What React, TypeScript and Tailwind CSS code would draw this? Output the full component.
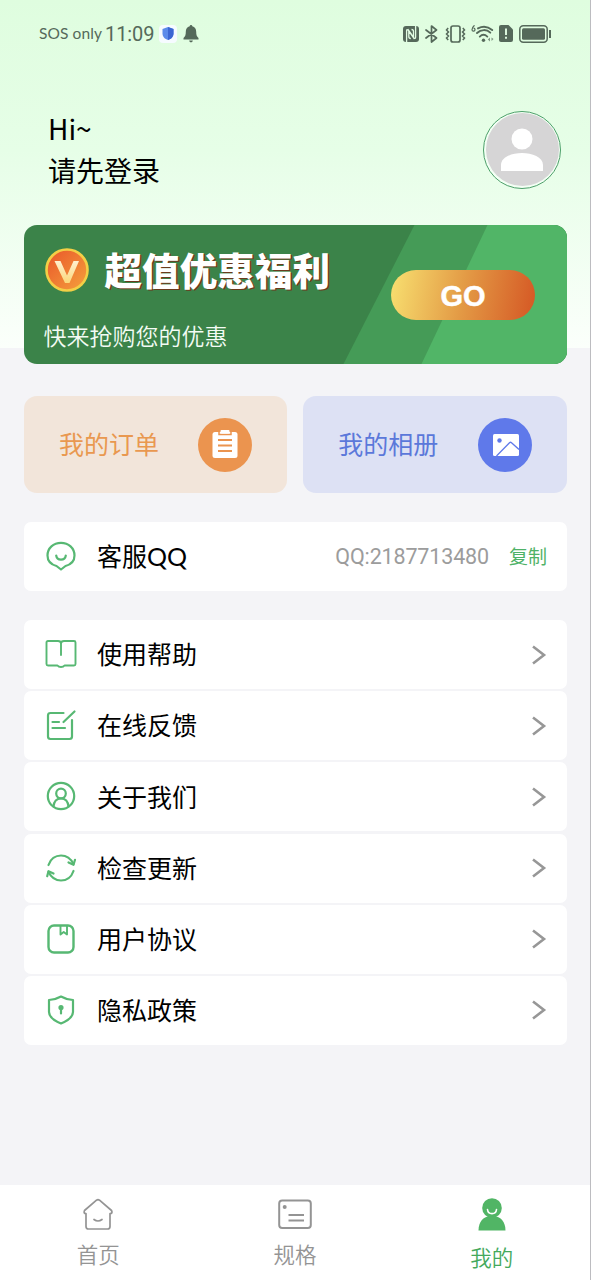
import { ReactNode } from "react";

const StatusBar = () => {
  return (
    <div className="flex h-[67px] items-center pl-[39px] pr-[38px] text-[#55695a]">
      <span className="w-[66px] whitespace-nowrap font-['Lato',sans-serif] text-[15.500px] tracking-[0.100px]">
        SOS only
      </span>
      <span className="w-[54px] whitespace-nowrap font-['Roboto',sans-serif] text-[20px] tracking-[-0.1px]">
        11:09
      </span>
      <span className="flex h-[18px] w-[18px] items-center justify-center rounded bg-[#f6fbff]">
        <svg width="12" height="13" viewBox="0 0 12 13">
          <path d="M6 0 11.500 2v4.500C11.500 10 9 12 6 13 3 12 .5 10 .5 6.500V2Z" fill="#5b8bea" />
          <path d="M6 0 11.500 2v4.500C11.500 10 9 12 6 13Z" fill="#3c66d2" />
        </svg>
      </span>
      <svg className="ml-[6px]" width="16" height="18" viewBox="0 0 16 18" fill="currentColor">
        <path d="M8 0c.8 0 1.300.6 1.300 1.300C11.900 1.900 13.200 4 13.200 6.800c0 3.200.5 4.800 2.300 6.200v1.500H.5V13c1.800-1.400 2.300-3 2.300-6.200C2.800 4 4.100 1.900 6.700 1.300 6.700.6 7.200 0 8 0Z" />
        <path d="M6.200 15.500h3.600C9.800 16.700 9 17.300 8 17.300s-1.800-.6-1.800-1.800Z" />
      </svg>

      <div className="ml-auto flex items-center">
        {/* nfc */}
        <svg width="16" height="16" viewBox="0 0 16 16">
          <path d="M3 0h10a3 3 0 0 1 3 3v10a3 3 0 0 1-3 3H3a3 3 0 0 1-3-3V3a3 3 0 0 1 3-3Z" fill="currentColor" />
          <path d="M3.600 16V5Q3.600 2.600 5.300 4.300L10.500 11.700V5.500Q10.500 3.500 8.500 3.500M12.600 0V11Q12.600 13.400 10.800 11.700L5.800 4.500V10.500Q5.800 12.500 7.800 12.500" fill="none" stroke="#e2fde3" strokeWidth="1.300" />
        </svg>
        <svg className="ml-[6px]" width="13" height="18" viewBox="0 0 13 18" fill="none" stroke="currentColor" strokeWidth="1.700" strokeLinejoin="round" strokeLinecap="round">
          <path d="m1 5 10.500 8L6.500 17V1l5 4L1 13" />
        </svg>
        {/* vibrate */}
        <svg className="ml-[7px]" width="21" height="18" viewBox="0 0 21 18" fill="none" stroke="currentColor" strokeWidth="1.500">
          <rect x="6" y="1" width="9" height="16" rx="2" strokeWidth="1.700" />
          <path d="M3.200 3 1.500 5l2 2-2 2 2 2-2 2 1.700 2M17.800 3l1.700 2-2 2 2 2-2 2 2 2-1.700 2" />
        </svg>
        {/* wifi 6 */}
        <svg className="ml-[5px]" width="24" height="18" viewBox="0 0 24 18">
          <g fill="none" stroke="currentColor" strokeWidth="1.900" strokeLinecap="round">
            <path d="M7 3.400c5-2.600 10.300-1.600 14.200 1.700" />
            <path d="M6 8c4-3.800 9.700-3.900 13.300-.3" />
            <path d="M8.800 11.600c2.200-2.100 5.200-2.100 7.500 0" />
          </g>
          <circle cx="12.500" cy="15.300" r="1.700" fill="currentColor" />
          <path d="M19 12.500v4l-2.200-2ZM20.500 12.500l2 1.500-2 2" fill="currentColor" opacity=".7" />
          <path d="M3.500.3C1.700 1.800 1 3.500 1 4.700a1.500 1.500 0 1 0 1.500-1.600" fill="none" stroke="currentColor" strokeWidth="1.200" />
        </svg>
        <svg className="ml-[4px]" width="14" height="17" viewBox="0 0 14 17">
          <path d="M2 0h7.500L14 4.500V15a2 2 0 0 1-2 2H2a2 2 0 0 1-2-2V2a2 2 0 0 1 2-2Z" fill="currentColor" />
          <path d="M7 3.500v6.500M7 11.800v2" stroke="#e2fde3" strokeWidth="1.900" />
        </svg>
        <svg className="ml-[6px]" width="33" height="18" viewBox="0 0 33 18">
          <rect x=".8" y=".8" width="27.400" height="16.400" rx="3.500" fill="none" stroke="currentColor" strokeWidth="1.500" />
          <rect x="3" y="3.300" width="23" height="11.400" rx="1.500" fill="currentColor" />
          <path d="M31 5v8" stroke="currentColor" strokeWidth="2" />
        </svg>
      </div>
    </div>
  );
};

const Profile = () => {
  return (
    <div className="flex h-[158px] items-start justify-between pl-12 pr-[29px] pt-[42px]">
      <div className="text-[28px] leading-[41px] text-black">
        <p className="-mt-px mb-px">Hi~</p>
        <p>请先登录</p>
      </div>
      <div className="mt-[1.500px] flex h-[78px] w-[78px] items-center justify-center rounded-full border-[1.500px] border-[#4da06a] bg-[#f3fff4]">
        <div className="flex h-[73px] w-[73px] items-center justify-center rounded-full bg-[#d6d5d6]">
          <svg className="-mt-px" width="42" height="43" viewBox="0 0 42 43" fill="white">
            <circle cx="21" cy="11" r="10.500" />
            <path d="M0 43v-6C0 29 11 25 21 25s21 4 21 12v6Z" />
          </svg>
        </div>
      </div>
    </div>
  );
};

const Banner = () => {
  return (
    <div className="relative h-[139px] shrink-0 overflow-hidden rounded-[13px] bg-[#3b8349]">
      <div className="absolute inset-0 bg-[#459b57] [clip-path:polygon(391px_0,100%_0,100%_100%,320px_100%)]" />
      <div className="absolute inset-0 bg-[#51b567] [clip-path:polygon(464px_0,100%_0,100%_100%,398px_100%)]" />
      <div className="relative flex h-full justify-between pl-[20px] pr-[32px]">
        <div>
          <div className="flex h-[90px] items-center gap-[16px]">
            <svg className="ml-px" width="44" height="44" viewBox="0 0 44 44">
              <defs>
                <linearGradient id="coin" x1="0" y1="0" x2="1" y2="1">
                  <stop offset="0" stopColor="#e9552a" />
                  <stop offset="1" stopColor="#f5a23c" />
                </linearGradient>
                <linearGradient id="vee" x1="0" y1="0" x2="0" y2="1">
                  <stop offset="0" stopColor="#fff0cf" />
                  <stop offset="1" stopColor="#fbd778" />
                </linearGradient>
              </defs>
              <circle cx="22" cy="22" r="20.500" fill="url(#coin)" stroke="#f3cf46" strokeWidth="2.600" />
              <path d="M9.500 13h6L22 27.500 28.500 13H34L24.500 35h-4.500Z" fill="url(#vee)" />
            </svg>
            <h2 className="-mt-[2px] whitespace-nowrap text-[37.600px] font-black leading-[50px] text-white [text-shadow:1.500px_1px_0_#6b3a1c]">
              超值优惠福利
            </h2>
          </div>
          <p className="text-[23px] font-[350] leading-[40px] text-[#f3fbf4]">快来抢购您的优惠</p>
        </div>
        <button className="mt-[45px] flex h-[50px] w-[144px] items-center justify-center rounded-full bg-linear-[100deg] from-[#f8e070] via-[#e39a45] to-[#d55724] pt-[4px] font-['Liberation_Sans',sans-serif] text-[29px] font-bold text-white [-webkit-text-stroke:0.500px_white]">
          GO
        </button>
      </div>
    </div>
  );
};

const Shortcuts = () => {
  return (
    <div className="mt-8 grid grid-cols-2 gap-4">
      <div className="flex h-[97px] items-center justify-between rounded-[13px] bg-[#f2e5da] pl-[35.500px] pr-[35px] text-[25px] text-[#e99850]">
        <span className="-mt-px">我的订单</span>
        <span className="flex h-[54px] w-[54px] items-center justify-center rounded-full bg-[#eb944f]">
          <svg className="-mt-px" width="26" height="28" viewBox="0 0 26 28">
            <rect x=".5" y="2" width="25" height="26" rx="2.500" fill="white" />
            <path d="M7 0v4.500h12V0" fill="none" stroke="#eb944f" strokeWidth="1.500" />
            <rect x="8.500" y="0" width="9" height="3.500" rx="1" fill="white" />
            <path d="M6 10h14M6 15.500h14M6 21h14" stroke="#eb944f" strokeWidth="2" />
          </svg>
        </span>
      </div>
      <div className="flex h-[97px] items-center justify-between rounded-[13px] bg-[#dde1f4] pl-[35px] pr-[35px] text-[25px] text-[#5b78da]">
        <span className="-mt-px">我的相册</span>
        <span className="flex h-[54px] w-[54px] items-center justify-center rounded-full bg-[#5f79ea]">
          <svg className="ml-[2px]" width="26" height="22" viewBox="0 0 26 22">
            <rect width="26" height="22" rx="1.500" fill="white" />
            <circle cx="6.500" cy="6.500" r="2.200" fill="#5f79ea" />
            <path d="M3.500 22 16.500 8.700Q17.500 7.800 18.500 8.700L26 15.500" fill="none" stroke="#5f79ea" strokeWidth="1.300" />
          </svg>
        </span>
      </div>
    </div>
  );
};

const GreenIcon = ({ children }: { children: ReactNode }) => (
  <svg
    className="-mt-px"
    width="32"
    height="32"
    viewBox="0 0 32 32"
    fill="none"
    stroke="#57b873"
    strokeWidth="2.200"
    strokeLinecap="round"
    strokeLinejoin="round"
  >
    {children}
  </svg>
);

const menu: { label: string; icon: ReactNode }[] = [
  {
    label: "使用帮助",
    icon: (
      <path d="M16 17V5.500Q16 3 13 3H3Q1.500 3 1.500 4.500V26Q1.500 27.500 3 27.500H12.500Q13.500 29 16 29T19.500 27.500H29Q30.500 27.500 30.500 26V4.500Q30.500 3 29 3H19Q16 3 16 5.500" strokeWidth="1.900" />
    ),
  },
  {
    label: "在线反馈",
    icon: (
      <path d="M18.500 4H5.500Q3 4 3 6.500V27.500Q3 30 5.500 30H24.500Q27 30 27 27.500V11M18.500 13 29.500 2.500M7.500 13H14M7.500 19H20" />
    ),
  },
  {
    label: "关于我们",
    icon: (
      <>
        <circle cx="16" cy="16" r="13.200" />
        <circle cx="16" cy="13.500" r="4.800" />
        <path d="M8.500 26.500C9 21 12 18.500 16 18.500S23 21 23.500 26.500" />
      </>
    ),
  },
  {
    label: "检查更新",
    icon: (
      <>
        <path d="M3.500 13C5.500 7 10.500 3.500 16 3.500S26 7 28.500 12M28.500 19C26.500 25 21.500 28.500 16 28.500S6 25 3.500 20" />
        <path d="M23.500 10.500 28.500 12.800 30 7.800M2.200 24.200 3.500 19.200 8.500 21.500" />
      </>
    ),
  },
  {
    label: "用户协议",
    icon: (
      <>
        <rect x="3.500" y="2.500" width="25" height="27" rx="5.500" strokeWidth="2.400" />
        <path d="M15.500 3V11.500L18.700 9 22 11.500V3" strokeWidth="1.900" />
      </>
    ),
  },
  {
    label: "隐私政策",
    icon: (
      <>
        <path d="M16 2.500Q21 5.500 28 6V18C28 23.500 22 27 16 29.500 10 27 4 23.500 4 18V6Q11 5.500 16 2.500Z" />
        <circle cx="16" cy="13.500" r="1.500" fill="#57b873" />
        <path d="M16 14V19.500" />
      </>
    ),
  },
];

const Row = ({
  icon,
  label,
  children,
}: {
  icon: ReactNode;
  label: ReactNode;
  children: ReactNode;
}) => (
  <div className="flex h-[69px] items-center rounded-[7px] bg-white pl-[21.500px] pr-[20px]">
    <GreenIcon>{icon}</GreenIcon>
    <span className="-mt-px ml-[20px] text-[25px] text-black">{label}</span>
    <div className="ml-auto flex items-center">{children}</div>
  </div>
);

const TabBar = () => {
  return (
    <nav className="grid h-[95px] grid-cols-3 bg-white text-[21.500px] font-[350] leading-[30px] text-[#949494]">
      <div className="flex flex-col items-center pt-[13px]">
        <svg width="32" height="33" viewBox="0 0 32 33" fill="none" stroke="#949494" strokeWidth="1.700" strokeLinejoin="round" strokeLinecap="round">
          <path d="M4 15.500Q1.200 15.500 2.500 12.500L14.500 2.200Q16 1.200 17.500 2.200L29.500 12.500Q31 15.500 28 15.500V28.500Q28 31 25.500 31H6.500Q4 31 4 28.500Z" />
          <path d="M12 21.500Q16 24.500 20 21.500" />
        </svg>
        <span className="mt-[8px]">首页</span>
      </div>
      <div className="flex flex-col items-center pt-[13px]">
        <svg width="34" height="33" viewBox="0 0 34 33" fill="none" stroke="#949494" strokeWidth="2">
          <rect x="1.200" y="2.500" width="31.600" height="27.500" rx="3" />
          <circle cx="6.700" cy="9" r="2" fill="#949494" stroke="none" />
          <path d="M10.500 17H26M10.500 22.500H26" strokeWidth="2.200" />
        </svg>
        <span className="mt-[8px]">规格</span>
      </div>
      <div className="flex flex-col items-center pt-[13px] text-[#44a95c]">
        <svg width="28" height="33" viewBox="0 0 28 33">
          <circle cx="14" cy="10" r="9.800" fill="#51b565" />
          <path d="M.5 32.500C.5 24 5 18 14 18s13.500 6 13.500 14.500Z" fill="#51b565" />
          <path d="M9.500 11.500C10 17 18 17 18.500 11.500" fill="none" stroke="white" strokeWidth="1.600" strokeLinecap="round" />
        </svg>
        <span className="mt-[11px]">我的</span>
      </div>
    </nav>
  );
};

const App = () => {
  return (
    <div className="flex h-[1280px] w-[591px] flex-col border-r border-[#bcbcc0] bg-[#f4f4f7] bg-[linear-gradient(to_bottom,#dffddf_0,#e6fee7_150px,#fbfffb_348px,#f4f4f7_348px)] font-['Noto_Sans_CJK_SC',sans-serif]">
      <StatusBar />
      <Profile />
      <main className="flex flex-1 flex-col pl-[23.500px] pr-[23px]">
        <Banner />
        <Shortcuts />
        <div className="mt-[29px]">
          <Row
            label={
              <>
                客服<span className="font-['Lato',sans-serif]">QQ</span>
              </>
            }
            icon={
              <>
                <path d="M16 29.500 11.500 26C6 24.500 2.500 20.500 2.500 15.500 2.500 8 8.500 2.800 16 2.800S29.500 8 29.500 15.500C29.500 20.500 26 24.500 20.500 26Z" />
                <path d="M11.200 15.500C12 21 20 21 20.800 15.500" />
              </>
            }
          >
            <span className="mt-px font-['Roboto',sans-serif] text-[21.500px] tracking-[-0.150px] text-[#9c9c9c]">
              QQ:2187713480
            </span>
            <span className="ml-[20px] text-[19px] text-[#4fb268]">复制</span>
          </Row>
        </div>
        <div className="mt-[29px] flex flex-col gap-[2.200px]">
          {menu.map((item) => (
            <Row key={item.label} label={item.label} icon={item.icon}>
              <svg width="16" height="20" viewBox="0 0 16 20" fill="none" stroke="#979797" strokeWidth="2.600">
                <path d="M2 1.500 13 10 2 18.500" />
              </svg>
            </Row>
          ))}
        </div>
      </main>
      <TabBar />
    </div>
  );
};

export default App;
